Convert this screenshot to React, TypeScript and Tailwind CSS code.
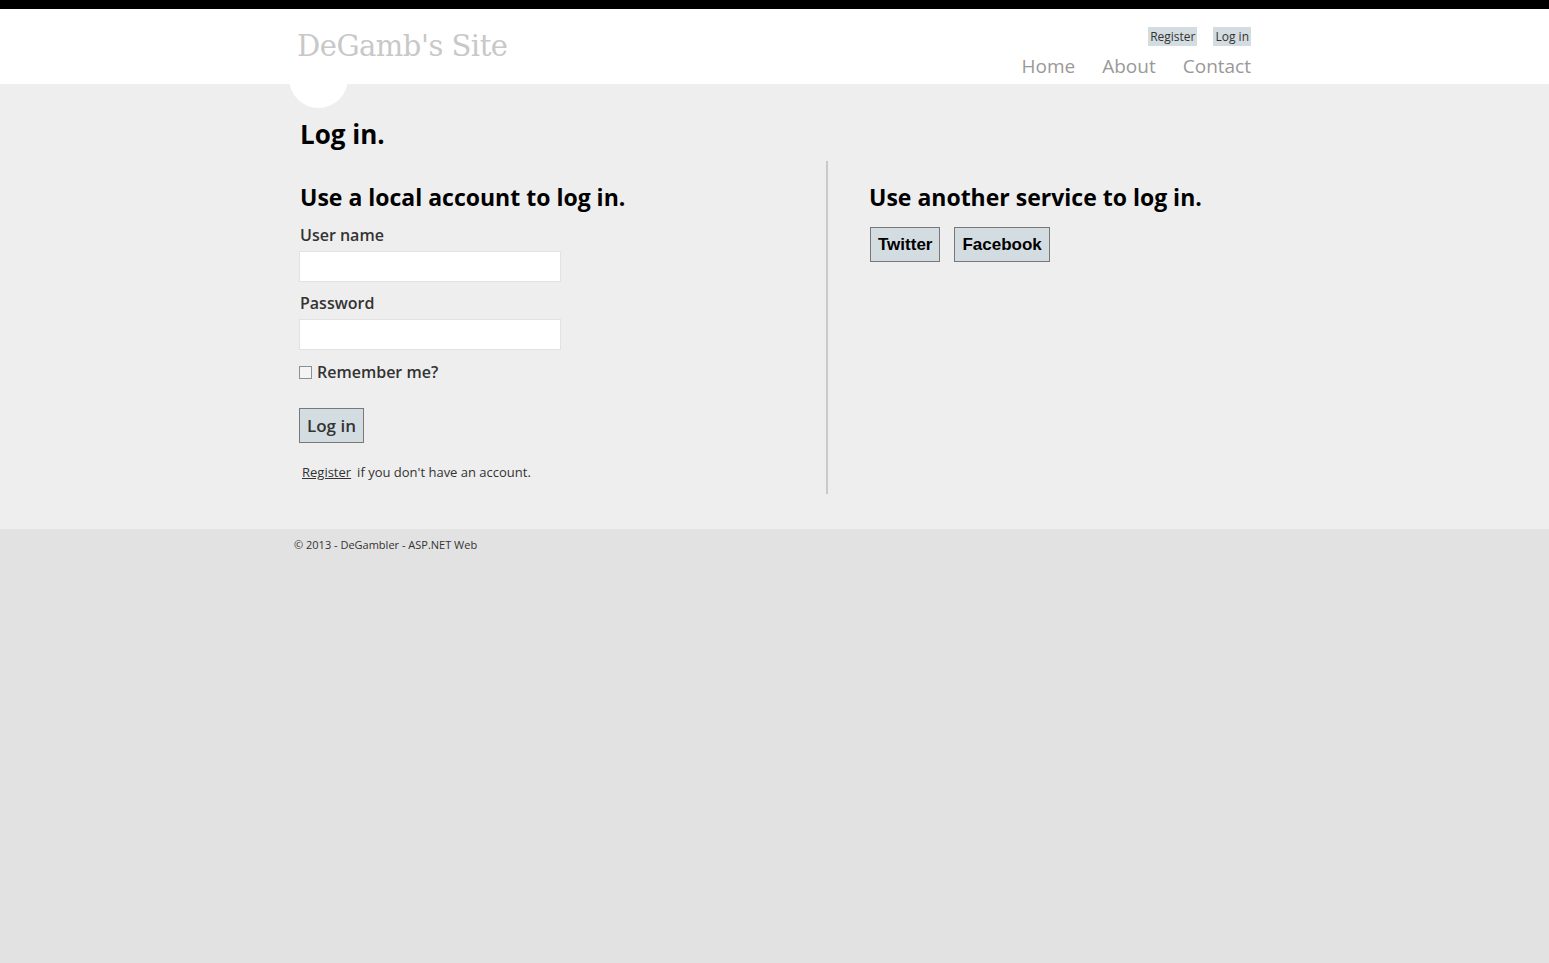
import React from "react";

const sans = "font-['Open_Sans','Noto_Sans',sans-serif]";

export default function App() {
  return (
    <div className={`min-h-[963px] bg-[#e2e2e2] text-[#333] ${sans}`}>
      <div className="h-[9px] bg-black" />

      {/* header */}
      <header className="relative z-10 bg-white">
        <div className="mx-auto w-[961px] h-[75px] flex justify-between">
          <div className="relative pl-[3px] pt-[19px]">
            <div className="absolute left-[-5px] top-[40px] w-[59px] h-[59px] rounded-full bg-white" />
            <p className="relative font-['DejaVu_Serif','Liberation_Serif',serif] text-[29px] leading-[36px] tracking-[-0.5px] text-[#c8c8c8]">
              DeGamb's Site
            </p>
          </div>
          <div className="flex flex-col items-end pt-[18px] pr-[4px]">
            <div className="flex gap-[16px] text-[12px] leading-[19px] text-[#333]">
              <a className="bg-[#d3dce0] px-[2px]">Register</a>
              <a className="bg-[#d3dce0] px-[2px]">Log in</a>
            </div>
            <nav className="flex gap-[27px] mt-[8px] text-[19px] leading-[25px] text-[#999]">
              <a>Home</a>
              <a>About</a>
              <a>Contact</a>
            </nav>
          </div>
        </div>
      </header>

      {/* main */}
      <main className="bg-[#eeeeee]">
        <div className="mx-auto w-[961px] pt-[32px] pb-[35px] pl-[5px]">
          <h1 className="ml-[1px] text-[26px] leading-[36px] font-bold text-black">Log in.</h1>
          <div className="flex mt-[9px]">
            <section className="w-[529px] border-r-2 border-[#c9c9c9] pt-[20px] pb-[13px]">
              <h2 className="ml-[1px] text-[23px] leading-[32px] font-bold text-black">Use a local account to log in.</h2>
              <form className="mt-[12px]">
                <label className="block ml-[1px] text-[16px] leading-[20px] font-semibold">User name</label>
                <input className="block mt-[6px] w-[262px] h-[31px] bg-white border border-[#e2e2e2]" />
                <label className="block ml-[1px] mt-[11px] text-[16px] leading-[20px] font-semibold">Password</label>
                <input type="password" className="block mt-[6px] w-[262px] h-[31px] bg-white border border-[#e2e2e2]" />
                <div className="flex items-center mt-[12px]">
                  <span className="w-[13px] h-[13px] border border-[#8e8f8f] bg-[#f4f4f4]" />
                  <span className="ml-[5px] text-[16px] leading-[20px] font-semibold">Remember me?</span>
                </div>
                <button type="button" className="block mt-[26px] h-[35px] px-[7px] bg-[#d3dce0] border border-[#787878] text-[17px] font-semibold text-[#333]">
                  Log in
                </button>
                <p className="mt-[20px] pl-[3px] text-[13px] leading-[18px]">
                  <a className="underline">Register</a>
                  <span className="ml-[6px]">if you don't have an account.</span>
                </p>
              </form>
            </section>
            <section className="pl-[41px] pt-[20px]">
              <h2 className="text-[23px] leading-[32px] font-bold text-black">Use another service to log in.</h2>
              <div className="flex gap-[14px] mt-[14px] ml-[1px]">
                <button type="button" className="h-[35px] px-[7px] bg-[#d3dce0] border border-[#787878] font-['Liberation_Sans',Arial,sans-serif] text-[17px] font-semibold text-black">
                  Twitter
                </button>
                <button type="button" className="h-[35px] px-[7px] bg-[#d3dce0] border border-[#787878] font-['Liberation_Sans',Arial,sans-serif] text-[17px] font-semibold text-black">
                  Facebook
                </button>
              </div>
            </section>
          </div>
        </div>
      </main>

      {/* footer */}
      <footer className="mx-auto w-[961px] pt-[9px] text-[11px] leading-[14px] text-[#333]">
        © 2013 - DeGambler - ASP.NET Web
      </footer>
    </div>
  );
}
